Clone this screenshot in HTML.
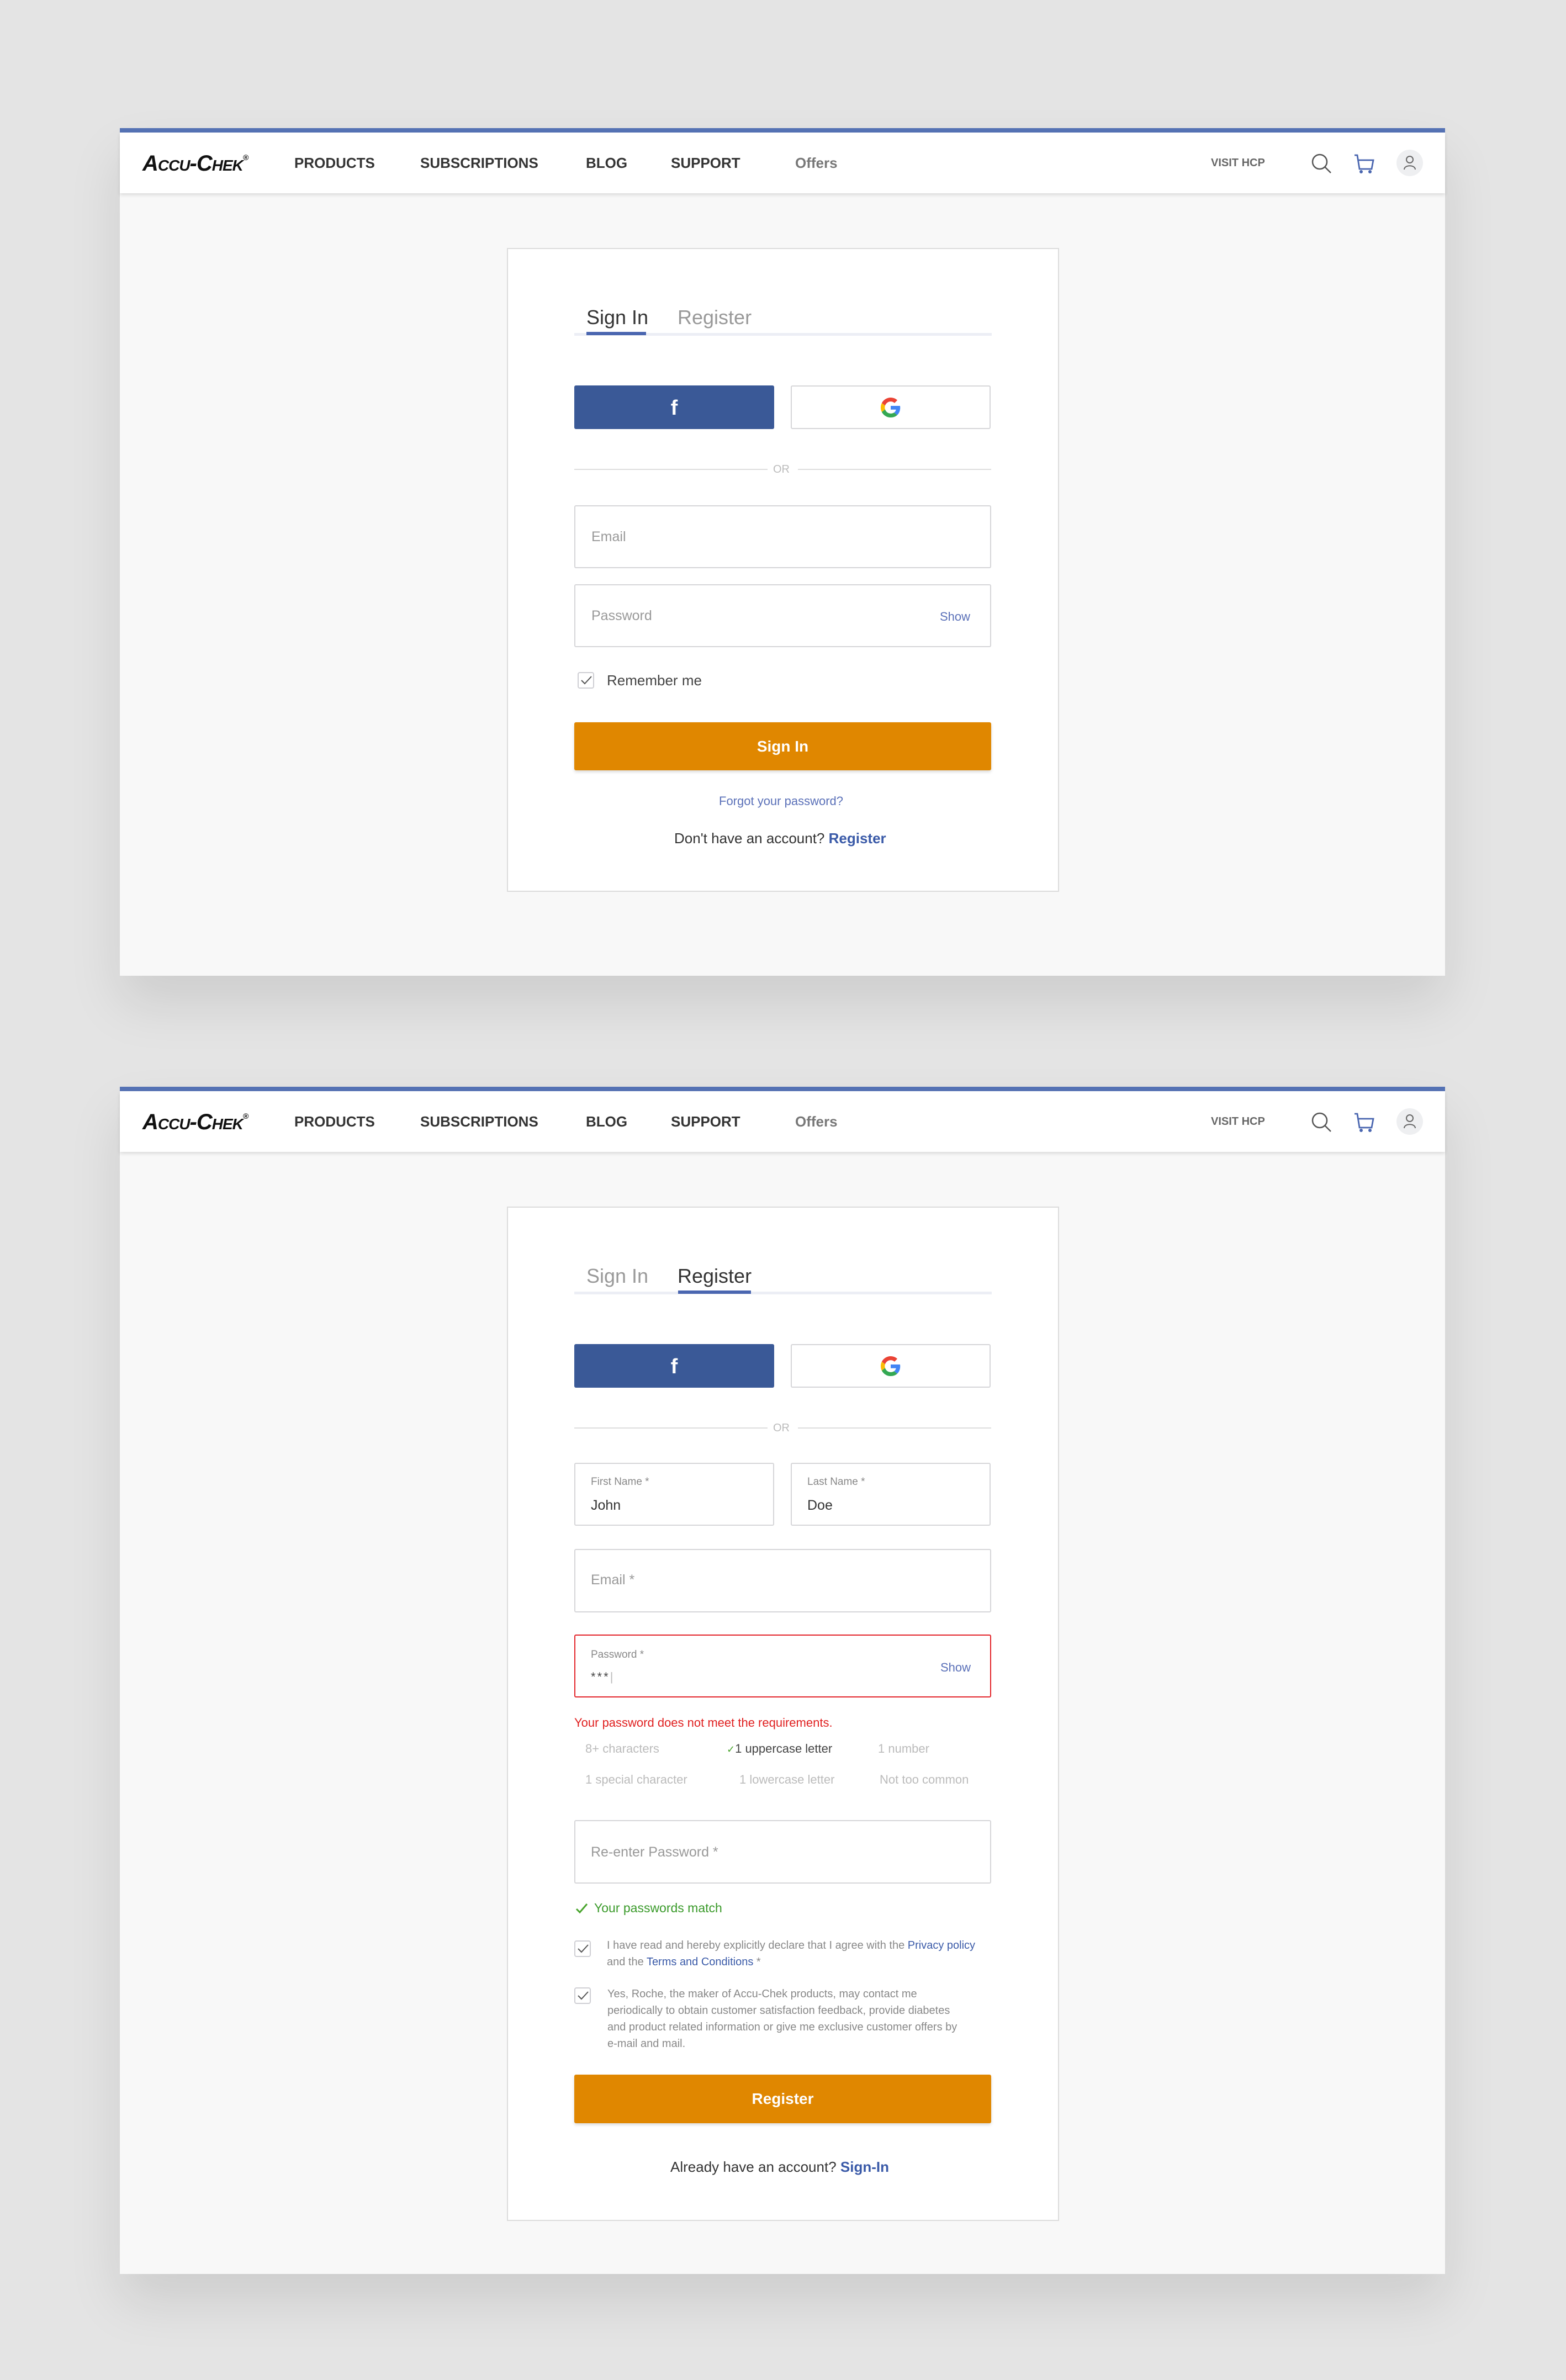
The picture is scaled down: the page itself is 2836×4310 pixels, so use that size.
<!DOCTYPE html>
<html><head><meta charset="utf-8"><style>
*{margin:0;padding:0;box-sizing:border-box}
body{width:2836px;height:4310px;background:#e4e4e4;position:relative;overflow:hidden;font-family:"Liberation Sans",Arial,sans-serif}
.a{position:absolute}
.panel{position:absolute;left:217px;width:2400px;background:#f8f8f8;box-shadow:0 50px 90px rgba(0,0,0,.10)}
.bar{position:absolute;left:0;top:0;width:100%;height:8px;background:#5572b4}
.hdr{position:absolute;left:0;top:8px;width:100%;height:110px;background:#fff;box-shadow:0 3px 6px rgba(0,0,0,.12)}
.nav{position:absolute;top:0;height:110px;line-height:110px;font-size:26px;font-weight:bold;color:#333}
.logo{position:absolute;left:41px;top:0;height:110px;line-height:112px;font-size:40px;font-weight:bold;font-style:italic;font-variant:small-caps;letter-spacing:-1px;color:#111}
.card{position:absolute;background:#fff;border:2px solid #dcdcdc;left:703px;width:1000px}
.t{position:absolute;white-space:nowrap;line-height:1}
.inp{position:absolute;border:2px solid #d6d6d9;border-radius:3px;background:#fff}
.btn{position:absolute;background:#e08700;border-radius:3px;box-shadow:0 3px 6px rgba(0,0,0,.15);color:#fff;font-weight:bold;font-size:28px;text-align:center}
.fb{position:absolute;background:#3a5997;border-radius:3px;color:#fff;font-weight:bold;font-size:38px;text-align:center}
.gg{position:absolute;border:2px solid #d6d6d9;border-radius:3px;background:#fff}
.cb{position:absolute;width:30px;height:30px;border:2px solid #cfcfd4;border-radius:4px;background:#fff}
</style></head><body>

<!-- PANEL 1 -->
<div class="panel" style="top:232px;height:1535px">
 <div class="bar"></div>
 <div class="hdr">
  <div class="logo">Accu-Chek<span style="font-size:14px;vertical-align:top;line-height:90px">®</span></div>
  <div class="nav" style="left:316px">PRODUCTS</div>
  <div class="nav" style="left:544px">SUBSCRIPTIONS</div>
  <div class="nav" style="left:844px">BLOG</div>
  <div class="nav" style="left:998px">SUPPORT</div>
  <div class="nav" style="left:1223px;color:#777;font-weight:bold">Offers</div>
  <div class="nav" style="left:1976px;font-size:20px;color:#666">VISIT HCP</div>
  <svg class="a" style="left:2156px;top:36px" width="40" height="40" viewBox="0 0 40 40"><circle cx="17" cy="17" r="13" fill="none" stroke="#555" stroke-width="2.5"/><path d="M26 26 L37 37" stroke="#555" stroke-width="2.5"/></svg>
  <svg class="a" style="left:2234px;top:38px" width="40" height="40" viewBox="0 0 40 40"><path d="M2 3 H7 L11 28 H33 L36 12 H9" fill="none" stroke="#4a66b0" stroke-width="2.8"/><circle cx="14" cy="33" r="3" fill="#4a66b0"/><circle cx="30" cy="33" r="3" fill="#4a66b0"/></svg>
  <div class="a" style="left:2312px;top:31px;width:48px;height:48px;border-radius:50%;background:#eeeff1"></div>
  <svg class="a" style="left:2322px;top:40px" width="28" height="30" viewBox="0 0 28 30"><circle cx="14" cy="9" r="6" fill="none" stroke="#666" stroke-width="2"/><path d="M4 27 C4 18 24 18 24 27" fill="none" stroke="#666" stroke-width="2"/></svg>
 </div>
</div>

<div class="card" style="top:449px;height:1166px;left:918px"></div>
<div class="t" style="left:1062px;top:557px;font-size:36px;color:#333">Sign In</div>
<div class="t" style="left:1227px;top:557px;font-size:36px;color:#999">Register</div>
<div class="a" style="left:1040px;top:603px;width:756px;height:5px;background:#eceef5"></div>
<div class="a" style="left:1062px;top:601px;width:108px;height:6px;background:#4a66b0"></div>
<div class="fb" style="left:1040px;top:698px;width:362px;height:79px;line-height:82px">f</div>
<div class="gg" style="left:1432px;top:698px;width:362px;height:79px"></div>
<svg class="a" style="left:1595px;top:720px" width="36" height="36" viewBox="0 0 48 48"><path fill="#EA4335" d="M24 9.5c3.54 0 6.71 1.22 9.21 3.6l6.85-6.85C35.9 2.38 30.47 0 24 0 14.62 0 6.51 5.38 2.56 13.22l7.98 6.19C12.43 13.72 17.74 9.5 24 9.5z"/><path fill="#4285F4" d="M46.98 24.55c0-1.57-.15-3.09-.38-4.55H24v9.02h12.94c-.58 2.96-2.26 5.48-4.78 7.18l7.73 6c4.51-4.18 7.09-10.36 7.09-17.65z"/><path fill="#FBBC05" d="M10.53 28.59c-.48-1.45-.76-2.99-.76-4.59s.27-3.14.76-4.59l-7.98-6.19C.92 16.46 0 20.12 0 24c0 3.88.92 7.54 2.56 10.78l7.97-6.19z"/><path fill="#34A853" d="M24 48c6.48 0 11.93-2.13 15.89-5.81l-7.73-6c-2.15 1.45-4.92 2.3-8.16 2.3-6.26 0-11.57-4.22-13.47-9.91l-7.98 6.19C6.51 42.62 14.62 48 24 48z"/></svg>
<div class="a" style="left:1040px;top:849px;width:350px;height:2px;background:#ddd"></div>
<div class="a" style="left:1445px;top:849px;width:350px;height:2px;background:#ddd"></div>
<div class="t" style="left:1400px;top:840px;font-size:20px;color:#bbb">OR</div>
<div class="inp" style="left:1040px;top:915px;width:755px;height:114px"></div>
<div class="t" style="left:1071px;top:960px;font-size:25px;color:#999">Email</div>
<div class="inp" style="left:1040px;top:1058px;width:755px;height:114px"></div>
<div class="t" style="left:1071px;top:1103px;font-size:25px;color:#999">Password</div>
<div class="t" style="left:1702px;top:1106px;font-size:22px;color:#5a70b8">Show</div>
<div class="cb" style="left:1046px;top:1217px"></div>
<svg class="a" style="left:1051px;top:1222px" width="22" height="20" viewBox="0 0 22 20"><path d="M2 10 L8 16 L20 3" fill="none" stroke="#555" stroke-width="2"/></svg>
<div class="t" style="left:1099px;top:1219px;font-size:26px;color:#444">Remember me</div>
<div class="btn" style="left:1040px;top:1308px;width:755px;height:87px;line-height:87px">Sign In</div>
<div class="t" style="left:1302px;top:1440px;font-size:22px;color:#5a70b8">Forgot your password?</div>
<div class="t" style="left:1221px;top:1505px;font-size:26px;color:#333">Don't have an account? <b style="color:#3a5aa8">Register</b></div>

<!-- PANEL 2 -->
<div class="panel" style="top:1968px;height:2150px">
 <div class="bar"></div>
 <div class="hdr">
  <div class="logo">Accu-Chek<span style="font-size:14px;vertical-align:top;line-height:90px">®</span></div>
  <div class="nav" style="left:316px">PRODUCTS</div>
  <div class="nav" style="left:544px">SUBSCRIPTIONS</div>
  <div class="nav" style="left:844px">BLOG</div>
  <div class="nav" style="left:998px">SUPPORT</div>
  <div class="nav" style="left:1223px;color:#777">Offers</div>
  <div class="nav" style="left:1976px;font-size:20px;color:#666">VISIT HCP</div>
  <svg class="a" style="left:2156px;top:36px" width="40" height="40" viewBox="0 0 40 40"><circle cx="17" cy="17" r="13" fill="none" stroke="#555" stroke-width="2.5"/><path d="M26 26 L37 37" stroke="#555" stroke-width="2.5"/></svg>
  <svg class="a" style="left:2234px;top:38px" width="40" height="40" viewBox="0 0 40 40"><path d="M2 3 H7 L11 28 H33 L36 12 H9" fill="none" stroke="#4a66b0" stroke-width="2.8"/><circle cx="14" cy="33" r="3" fill="#4a66b0"/><circle cx="30" cy="33" r="3" fill="#4a66b0"/></svg>
  <div class="a" style="left:2312px;top:31px;width:48px;height:48px;border-radius:50%;background:#eeeff1"></div>
  <svg class="a" style="left:2322px;top:40px" width="28" height="30" viewBox="0 0 28 30"><circle cx="14" cy="9" r="6" fill="none" stroke="#666" stroke-width="2"/><path d="M4 27 C4 18 24 18 24 27" fill="none" stroke="#666" stroke-width="2"/></svg>
 </div>
</div>

<div class="card" style="top:2185px;height:1837px;left:918px"></div>
<div class="t" style="left:1062px;top:2293px;font-size:36px;color:#999">Sign In</div>
<div class="t" style="left:1227px;top:2293px;font-size:36px;color:#333">Register</div>
<div class="a" style="left:1040px;top:2339px;width:756px;height:5px;background:#eceef5"></div>
<div class="a" style="left:1228px;top:2337px;width:132px;height:6px;background:#4a66b0"></div>
<div class="fb" style="left:1040px;top:2434px;width:362px;height:79px;line-height:82px">f</div>
<div class="gg" style="left:1432px;top:2434px;width:362px;height:79px"></div>
<svg class="a" style="left:1595px;top:2456px" width="36" height="36" viewBox="0 0 48 48"><path fill="#EA4335" d="M24 9.5c3.54 0 6.71 1.22 9.21 3.6l6.85-6.85C35.9 2.38 30.47 0 24 0 14.62 0 6.51 5.38 2.56 13.22l7.98 6.19C12.43 13.72 17.74 9.5 24 9.5z"/><path fill="#4285F4" d="M46.98 24.55c0-1.57-.15-3.09-.38-4.55H24v9.02h12.94c-.58 2.96-2.26 5.48-4.78 7.18l7.73 6c4.51-4.18 7.09-10.36 7.09-17.65z"/><path fill="#FBBC05" d="M10.53 28.59c-.48-1.45-.76-2.99-.76-4.59s.27-3.14.76-4.59l-7.98-6.19C.92 16.46 0 20.12 0 24c0 3.88.92 7.54 2.56 10.78l7.97-6.19z"/><path fill="#34A853" d="M24 48c6.48 0 11.93-2.13 15.89-5.81l-7.73-6c-2.15 1.45-4.92 2.3-8.16 2.3-6.26 0-11.57-4.22-13.47-9.91l-7.98 6.19C6.51 42.62 14.62 48 24 48z"/></svg>
<div class="a" style="left:1040px;top:2585px;width:350px;height:2px;background:#ddd"></div>
<div class="a" style="left:1445px;top:2585px;width:350px;height:2px;background:#ddd"></div>
<div class="t" style="left:1400px;top:2576px;font-size:20px;color:#bbb">OR</div>

<div class="inp" style="left:1040px;top:2649px;width:362px;height:114px"></div>
<div class="t" style="left:1070px;top:2674px;font-size:19px;color:#888">First Name *</div>
<div class="t" style="left:1070px;top:2714px;font-size:25px;color:#333">John</div>
<div class="inp" style="left:1432px;top:2649px;width:362px;height:114px"></div>
<div class="t" style="left:1462px;top:2674px;font-size:19px;color:#888">Last Name *</div>
<div class="t" style="left:1462px;top:2714px;font-size:25px;color:#333">Doe</div>

<div class="inp" style="left:1040px;top:2805px;width:755px;height:115px"></div>
<div class="t" style="left:1070px;top:2849px;font-size:25px;color:#999">Email *</div>

<div class="inp" style="left:1040px;top:2960px;width:755px;height:114px;border-color:#e3262b"></div>
<div class="t" style="left:1070px;top:2987px;font-size:19px;color:#888">Password *</div>
<div class="t" style="left:1070px;top:3026px;font-size:22px;color:#444;letter-spacing:3px">***<span style="color:#bbb;font-weight:normal">|</span></div>
<div class="t" style="left:1703px;top:3009px;font-size:22px;color:#5a70b8">Show</div>
<div class="t" style="left:1040px;top:3109px;font-size:22px;color:#e02020">Your password does not meet the requirements.</div>
<div class="t" style="left:1060px;top:3156px;font-size:22px;color:#bbb">8+ characters</div>
<div class="t" style="left:1316px;top:3156px;font-size:22px;color:#444"><span style="color:#4aa52e;font-size:18px">✓</span>1 uppercase letter</div>
<div class="t" style="left:1590px;top:3156px;font-size:22px;color:#bbb">1 number</div>
<div class="t" style="left:1060px;top:3212px;font-size:22px;color:#bbb">1 special character</div>
<div class="t" style="left:1339px;top:3212px;font-size:22px;color:#bbb">1 lowercase letter</div>
<div class="t" style="left:1593px;top:3212px;font-size:22px;color:#bbb">Not too common</div>

<div class="inp" style="left:1040px;top:3296px;width:755px;height:115px"></div>
<div class="t" style="left:1070px;top:3342px;font-size:25px;color:#999">Re-enter Password *</div>
<svg class="a" style="left:1042px;top:3445px" width="24" height="22" viewBox="0 0 24 22"><path d="M2 12 L8 18 L21 3" fill="none" stroke="#4aa52e" stroke-width="3"/></svg>
<div class="t" style="left:1076px;top:3444px;font-size:23px;color:#3a9a2a">Your passwords match</div>

<div class="cb" style="left:1040px;top:3514px"></div>
<svg class="a" style="left:1045px;top:3519px" width="22" height="20" viewBox="0 0 22 20"><path d="M2 10 L8 16 L20 3" fill="none" stroke="#555" stroke-width="2"/></svg>
<div class="a" style="left:1099px;top:3508px;width:700px;font-size:20px;line-height:30px;color:#888">I have read and hereby explicitly declare that I agree with the <span style="color:#3a5aa8">Privacy policy</span> and the <span style="color:#3a5aa8">Terms and Conditions</span> *</div>
<div class="cb" style="left:1040px;top:3599px"></div>
<svg class="a" style="left:1045px;top:3604px" width="22" height="20" viewBox="0 0 22 20"><path d="M2 10 L8 16 L20 3" fill="none" stroke="#555" stroke-width="2"/></svg>
<div class="a" style="left:1100px;top:3596px;width:645px;font-size:20px;line-height:30px;color:#888">Yes, Roche, the maker of Accu-Chek products, may contact me periodically to obtain customer satisfaction feedback, provide diabetes and product related information or give me exclusive customer offers by e-mail and mail.</div>

<div class="btn" style="left:1040px;top:3757px;width:755px;height:88px;line-height:88px">Register</div>
<div class="t" style="left:1214px;top:3911px;font-size:26px;color:#333">Already have an account? <b style="color:#3a5aa8">Sign-In</b></div>

</body></html>
